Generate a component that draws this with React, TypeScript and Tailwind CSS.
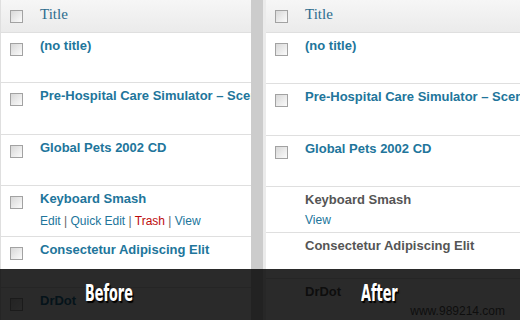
import React from 'react';

type Row = {
  title: string;
  h: string;
  check?: boolean;
  link?: boolean;
  actions?: 'full' | 'view';
};

const leftRows: Row[] = [
  { title: '(no title)', h: 'h-[50px]', check: true, link: true },
  { title: 'Pre-Hospital Care Simulator – Scenario Pack', h: 'h-[52px]', check: true, link: true },
  { title: 'Global Pets 2002 CD', h: 'h-[51px]', check: true, link: true },
  { title: 'Keyboard Smash', h: 'h-[51px]', check: true, link: true, actions: 'full' },
  { title: 'Consectetur Adipiscing Elit', h: 'h-[51px]', check: true, link: true },
  { title: 'DrDot', h: 'h-[51px]', check: true, link: true },
];

const rightRows: Row[] = [
  { title: '(no title)', h: 'h-[51px]', check: true, link: true },
  { title: 'Pre-Hospital Care Simulator – Scenario Pack', h: 'h-[52px]', check: true, link: true },
  { title: 'Global Pets 2002 CD', h: 'h-[51px]', check: true, link: true },
  { title: 'Keyboard Smash', h: 'h-[46px]', actions: 'view' },
  { title: 'Consectetur Adipiscing Elit', h: 'h-[46px]' },
  { title: 'DrDot', h: 'h-[51px]' },
];

const Checkbox = () => (
  <div className="w-[13px] h-[13px] shrink-0 border border-[#a2a2a2] bg-gradient-to-br from-[#d8d8d8] to-[#fbfbfb]" />
);

const Actions = ({ kind }: { kind: 'full' | 'view' }) => {
  if (kind === 'view') {
    return <div className="mt-[2px] text-[12px] leading-[18px] text-[#21759b]">View</div>;
  }
  return (
    <div className="mt-[4px] text-[12px] leading-[18px] text-[#666]">
      <span className="text-[#21759b]">Edit</span> | <span className="text-[#21759b]">Quick Edit</span> |{' '}
      <span className="text-[#bc0b0b]">Trash</span> | <span className="text-[#21759b]">View</span>
    </div>
  );
};

const Panel = ({ rows, className }: { rows: Row[]; className: string }) => (
  <div className={`flex flex-col overflow-hidden bg-white ${className}`}>
    {/* column header */}
    <div className="h-[33px] shrink-0 flex border-b border-[#dfdfdf] bg-gradient-to-b from-[#f6f6f6] to-[#ebebeb]">
      <div className="w-[39px] shrink-0 pl-[9px] pt-[10px]">
        <Checkbox />
      </div>
      <div className="pt-[5px] text-[15px] leading-[18px] text-[#2c6c8e] font-['Liberation_Serif',serif]">Title</div>
    </div>
    {rows.map((r, i) => (
      <div key={i} className={`${r.h} shrink-0 flex border-b border-[#dfdfdf]`}>
        <div className="w-[39px] shrink-0 pl-[9px] pt-[10px]">{r.check && <Checkbox />}</div>
        <div className="pt-[4px] min-w-0 flex-1">
          <div
            className={`whitespace-nowrap text-[13px] leading-[18px] font-bold ${
              r.link ? 'text-[#21759b]' : 'text-[#555]'
            }`}
          >
            {r.title}
          </div>
          {r.actions && <Actions kind={r.actions} />}
        </div>
      </div>
    ))}
  </div>
);

export default function App() {
  return (
    <div className="relative w-[520px] h-[320px] overflow-hidden bg-white font-['Liberation_Sans',Arial,sans-serif]">
      <div className="flex h-full">
        <Panel rows={leftRows} className="w-[251px] shrink-0 border-l border-[#dfdfdf]" />
        <div className="w-[12px] shrink-0 bg-[#cccccc]" />
        <Panel rows={rightRows} className="flex-1 border-l-[3px] border-[#ebebeb]" />
      </div>

      {/* caption bar */}
      <div className="absolute left-0 right-0 bottom-0 h-[51px] bg-black/[0.835] flex">
        <div className="w-[251px] shrink-0 pl-[85px] pt-[13px]">
          <span className="inline-block origin-left scale-x-[0.62] text-white font-bold text-[23px] leading-none font-['DejaVu_Sans_Condensed','DejaVu_Sans',sans-serif] [font-stretch:condensed] [text-shadow:2px_2px_1px_#000]">
            Before
          </span>
        </div>
        <div className="w-[12px] shrink-0" />
        <div className="flex-1 pl-[98px] pt-[13px]">
          <span className="inline-block origin-left scale-x-[0.62] text-white font-bold text-[23px] leading-none font-['DejaVu_Sans_Condensed','DejaVu_Sans',sans-serif] [font-stretch:condensed] [text-shadow:2px_2px_1px_#000]">
            After
          </span>
        </div>
        <div className="absolute right-[15px] top-[36px] text-[12px] leading-none text-[#0e0e0e]">www.989214.com</div>
      </div>
    </div>
  );
}
